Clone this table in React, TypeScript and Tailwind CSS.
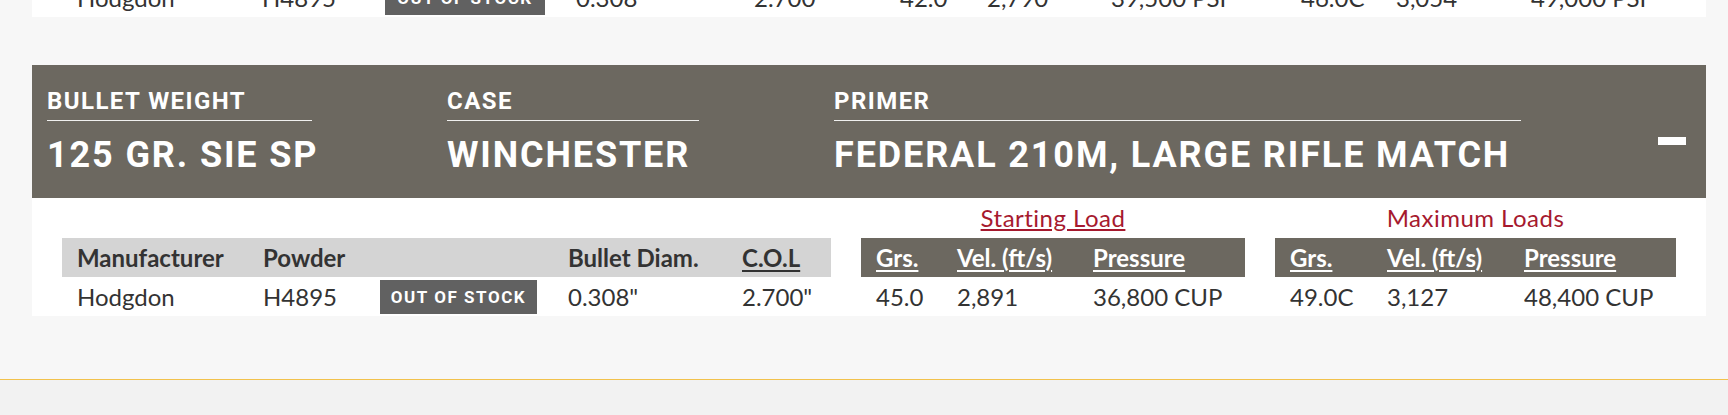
import React from 'react'

const head = "font-['Roboto',sans-serif] font-bold uppercase text-white"
const body = "font-['Lato','Noto_Sans',sans-serif] text-[24px] text-[#333]"

const specs = [
  { label: 'Bullet Weight', value: '125 gr. SIE SP', w: 'w-[265px]' },
  { label: 'Case', value: 'Winchester', w: 'w-[252px]' },
  { label: 'Primer', value: 'Federal 210M, Large Rifle Match', w: 'w-[687px]' },
]

function Badge({ w }: { w: string }) {
  return (
    <span
      className={`${w} inline-flex h-[34px] items-center justify-center bg-[#616161] font-['Roboto',sans-serif] text-[17px] font-bold uppercase tracking-[0.09em] text-white`}
    >
      Out of stock
    </span>
  )
}

function PrevRow() {
  // only the bottom of the previous card's data row is still on screen
  return (
    <div className="flex h-[17px] flex-col justify-end overflow-hidden bg-white px-[30px]">
      <div className={`${body} flex h-[39px] shrink-0 items-start gap-[30px] leading-[39px]`}>
        <div className="grid w-[793px] grid-cols-[185px_123px_191px_178px_116px]">
          <span className="pl-[15px]">Hodgdon</span>
          <span className="pl-[15px]">H4895</span>
          <span className="pl-[15px] pt-[3px] leading-none">
            <Badge w="w-[160px]" />
          </span>
          <span className="pl-[15px]">0.308"</span>
          <span className="pl-[15px]">2.700"</span>
        </div>
        <div className="grid w-[371px] grid-cols-[87px_124px_160px]">
          <span className="pl-[15px]">42.0</span>
          <span className="pl-[15px]">2,790</span>
          <span className="pl-[15px]">39,500 PSI</span>
        </div>
        <div className="grid w-[390px] grid-cols-[95px_135px_160px]">
          <span className="pl-[15px]">46.0C</span>
          <span className="pl-[15px]">3,054</span>
          <span className="pl-[15px]">49,000 PSI</span>
        </div>
      </div>
    </div>
  )
}

function LoadTable({
  title,
  underline,
  cols,
  width,
  row,
}: {
  title: string
  underline?: boolean
  cols: string
  width: string
  row: string[]
}) {
  return (
    <div className={`${width} flex flex-col`}>
      <a
        href="#"
        className={`mb-[5px] text-center text-[24px] leading-[30px] tracking-[0.02em] text-[#a6192e] ${underline ? 'underline underline-offset-[2px]' : ''}`}
      >
        {title}
      </a>
      <div className={`grid ${cols} h-[39px] bg-[#6c6860] font-bold leading-[39px] text-white`}>
        {['Grs.', 'Vel. (ft/s)', 'Pressure'].map((h) => (
          <span key={h} className="pl-[15px] underline underline-offset-[3px]">
            {h}
          </span>
        ))}
      </div>
      <div className={`grid ${cols} h-[39px] leading-[39px]`}>
        {row.map((c) => (
          <span key={c} className="pl-[15px]">
            {c}
          </span>
        ))}
      </div>
    </div>
  )
}

export default function App() {
  return (
    <div className="min-h-screen bg-[#f2f2f2]">
      <div className="border-b border-[#f2c24c] bg-[#f7f7f7] pb-[63px] pl-[32px] pr-[22px]">
        <PrevRow />

        <section className="mt-[48px]">
          <div className="flex items-start bg-[#6c6860] pb-[25px] pl-[15px] pr-[20px] pt-[24px]">
            <div className="flex gap-[135px]">
              {specs.map((s) => (
                <div key={s.label} className={`${s.w} flex flex-col`}>
                  <div
                    className={`${head} border-b border-white/90 pb-[7px] text-[24px] leading-[24px] tracking-[0.06em]`}
                  >
                    {s.label}
                  </div>
                  <div
                    className={`${head} mt-[16px] whitespace-nowrap text-[36px] leading-[36px] tracking-[0.052em]`}
                  >
                    {s.value}
                  </div>
                </div>
              ))}
            </div>
            <button type="button" aria-label="Collapse" className="ml-auto mt-[48px] h-[8px] w-[28px] bg-white" />
          </div>

          <div className={`${body} flex items-end gap-[30px] bg-white px-[30px] pt-[5px]`}>
            <div className="w-[769px]">
              <div className="grid h-[39px] grid-cols-[186px_117px_188px_174px_104px] bg-[#d4d4d4] font-bold leading-[39px]">
                <span className="pl-[15px]">Manufacturer</span>
                <span className="pl-[15px]">Powder</span>
                <span />
                <span className="pl-[15px]">Bullet Diam.</span>
                <span className="pl-[15px] underline underline-offset-[3px]">C.O.L</span>
              </div>
              <div className="grid h-[39px] grid-cols-[186px_117px_188px_174px_104px] leading-[39px]">
                <span className="pl-[15px]">Hodgdon</span>
                <span className="pl-[15px]">H4895</span>
                <span className="pl-[15px] pt-[3px] leading-none">
                  <Badge w="w-[157px]" />
                </span>
                <span className="pl-[15px]">0.308"</span>
                <span className="pl-[15px]">2.700"</span>
              </div>
            </div>

            <LoadTable
              title="Starting Load"
              underline
              width="w-[384px]"
              cols="grid-cols-[81px_136px_167px]"
              row={['45.0', '2,891', '36,800 CUP']}
            />
            <LoadTable
              title="Maximum Loads"
              width="w-[401px]"
              cols="grid-cols-[97px_137px_167px]"
              row={['49.0C', '3,127', '48,400 CUP']}
            />
          </div>
        </section>
      </div>
      <div className="h-[35px]" />
    </div>
  )
}
